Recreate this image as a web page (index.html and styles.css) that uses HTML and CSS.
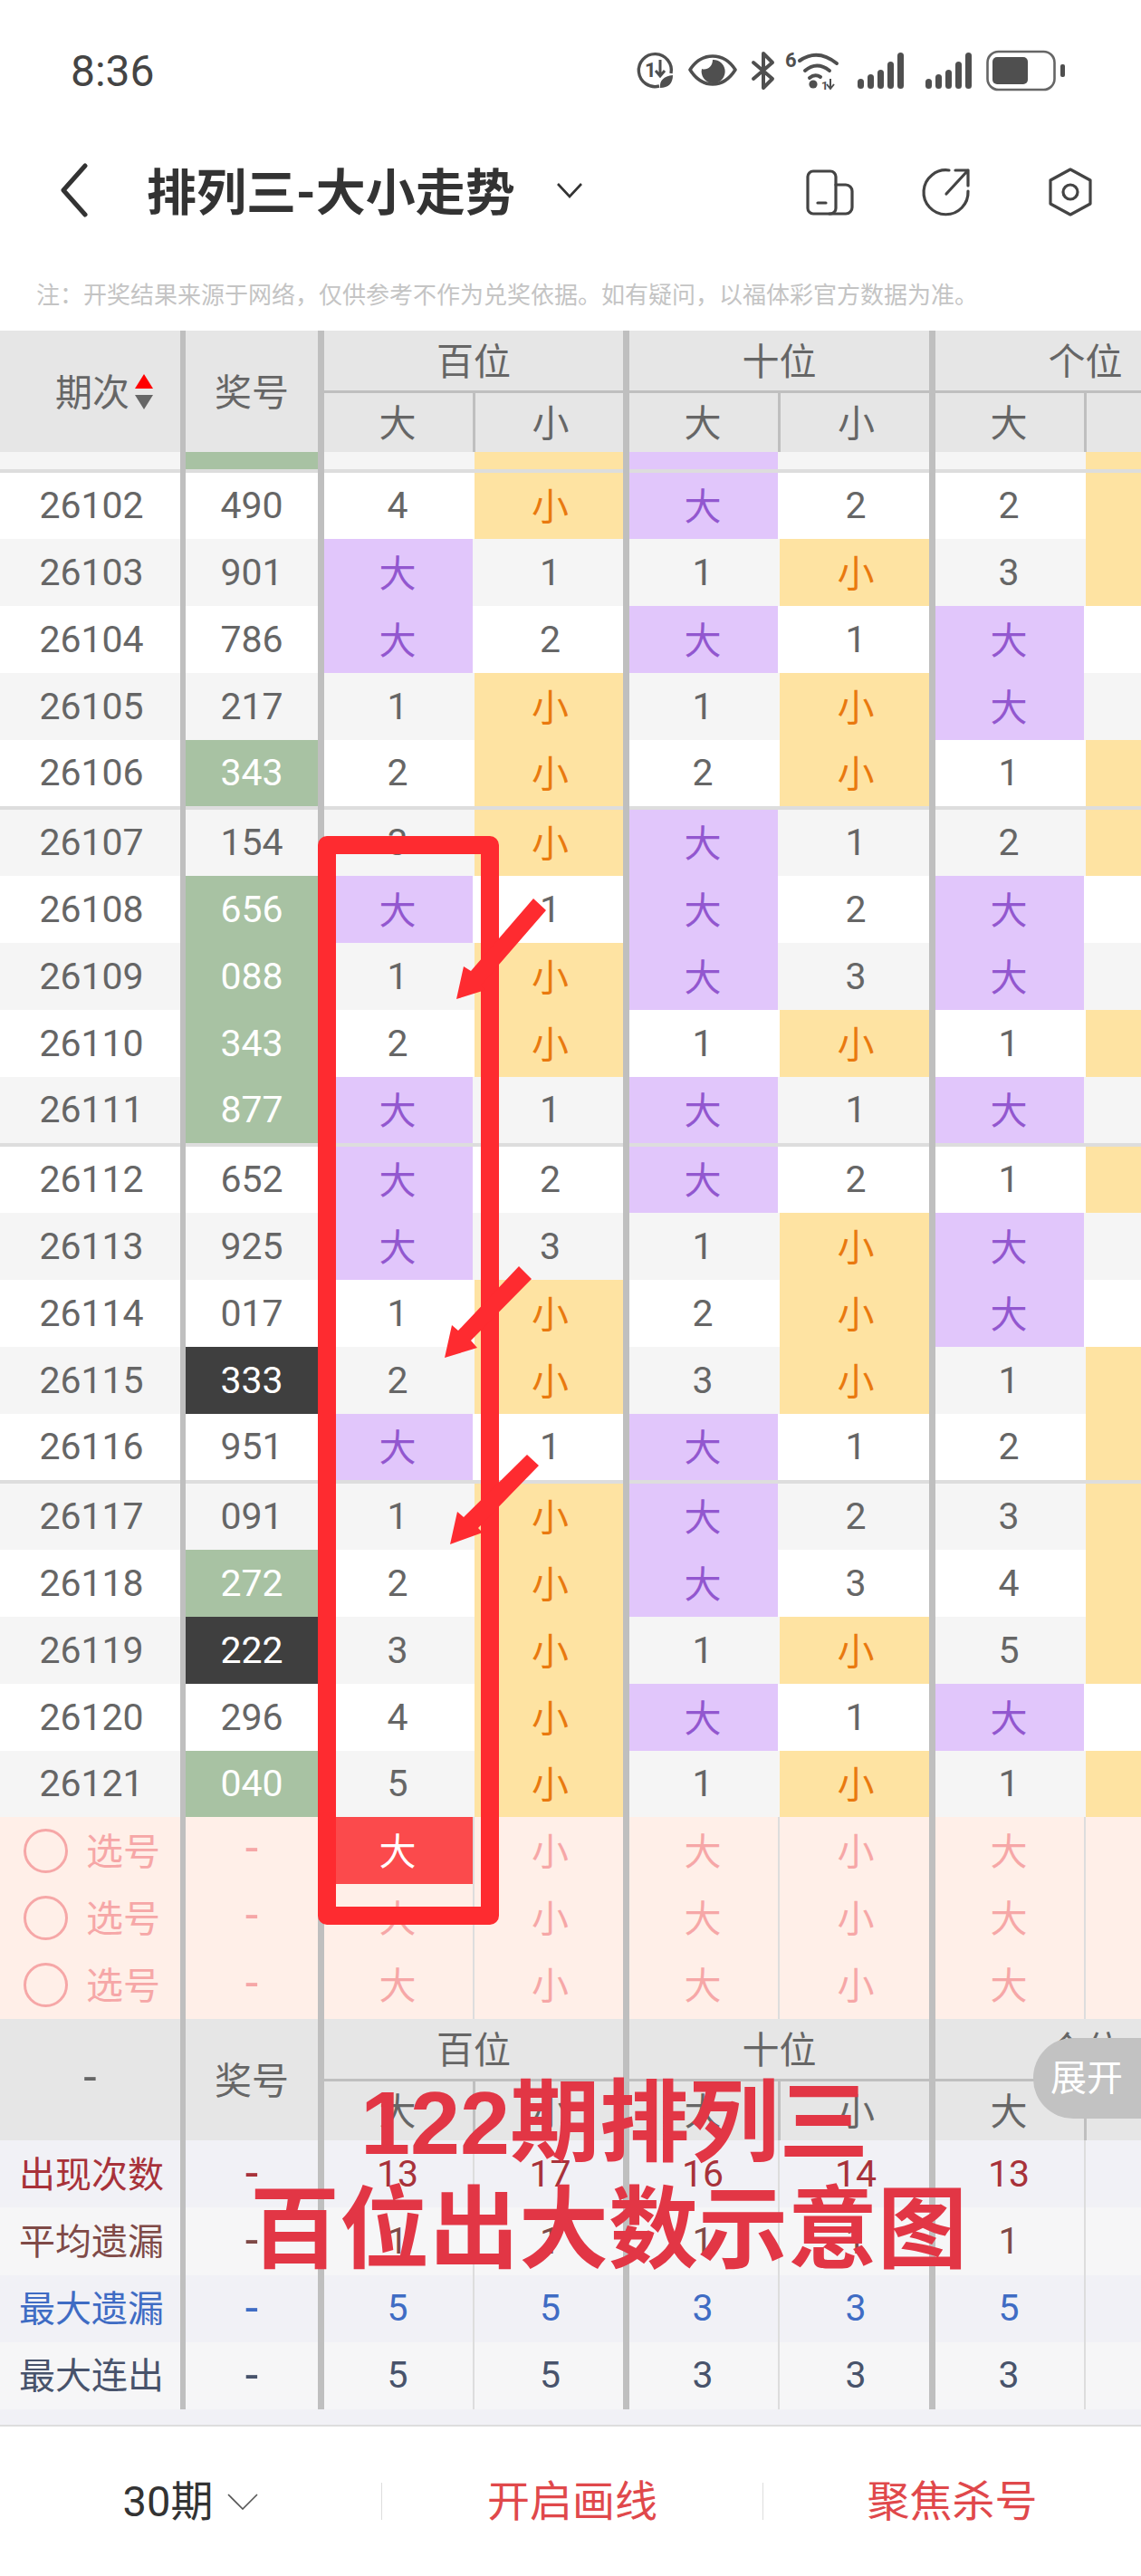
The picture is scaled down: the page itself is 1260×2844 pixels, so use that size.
FILE: index.html
```html
<!DOCTYPE html>
<html lang="zh-CN">
<head>
  <meta charset="UTF-8">
  <meta name="viewport" content="width=device-width, initial-scale=1.0">
  <title>排列三-大小走势</title>
  <link rel="stylesheet" href="styles.css">
</head>
<body>
  <!-- Status bar -->
  <div class="status">
    <span class="time">8:36</span>
    <svg class="status-icons" width="500" height="80" viewBox="0 0 500 80">
      <g fill="none" stroke="#4f4f4f" stroke-width="3.4">
        <path d="M38 55A18 18 0 1 1 51 41"/>
        <path d="M39 26V43M34 38L39 44L44 38" stroke-width="3"/>
      </g>
      <text x="22" y="45" class="icon-text" font-size="22">1</text>
      <path d="M39 57C38 49 43 44 53 43C53 52 48 57 39 57Z" fill="#4f4f4f"/>
      <path d="M72 37C79 26 87 22 97 22C107 22 115 26 122 37C115 48 107 53 97 53C87 53 79 48 72 37Z" fill="none" stroke="#4f4f4f" stroke-width="3.6" stroke-linejoin="round"/>
      <path d="M97 26A13 13 0 1 1 85 36C90 38 97 34 97 26Z" fill="#4f4f4f"/>
      <path d="M142 29L163 47L153 57V19L163 29L142 47" fill="none" stroke="#4f4f4f" stroke-width="4" stroke-linecap="round" stroke-linejoin="round"/>
      <text x="177" y="34" class="icon-text" font-size="22">6</text>
      <g fill="none" stroke="#4f4f4f" stroke-width="4" stroke-linecap="round">
        <path d="M193 27Q213 13 234 30"/>
        <path d="M199 38Q212 27 226 38"/>
        <path d="M204 46Q210 41 216 45"/>
      </g>
      <circle cx="208" cy="53" r="4.6" fill="#4f4f4f"/>
      <text x="217" y="59" class="icon-text" font-size="13">1</text>
      <path d="M227 47V58M223 53L227 58L231 53" fill="none" stroke="#4f4f4f" stroke-width="2"/>
      <g fill="#4f4f4f">
        <rect x="257" y="47" width="7" height="11" rx="3.5"/>
        <rect x="268" y="42" width="7" height="16" rx="3.5"/>
        <rect x="279" y="37" width="7" height="21" rx="3.5"/>
        <rect x="290" y="28" width="7" height="30" rx="3.5"/>
        <rect x="301" y="18" width="7" height="40" rx="3.5"/>
        <rect x="332" y="47" width="7" height="11" rx="3.5"/>
        <rect x="343" y="42" width="7" height="16" rx="3.5"/>
        <rect x="354" y="37" width="7" height="21" rx="3.5"/>
        <rect x="365" y="28" width="7" height="30" rx="3.5"/>
        <rect x="376" y="18" width="7" height="40" rx="3.5"/>
      </g>
      <rect x="400.5" y="17" width="74" height="42" rx="12" fill="none" stroke="#666" stroke-width="2.6"/>
      <rect x="406" y="23" width="39" height="30" rx="5" fill="#4f4f4f"/>
      <rect x="481" y="31" width="5" height="14" rx="2" fill="#4f4f4f"/>
    </svg>
  </div>

  <!-- Title bar -->
  <div class="nav">
    <svg class="back" width="32" height="60" viewBox="0 0 32 60">
      <path d="M28 3L4 30L28 57" fill="none" stroke="#333" stroke-width="5" stroke-linecap="round" stroke-linejoin="round"/>
    </svg>
    <h1>排列三-大小走势</h1>
    <svg class="title-arrow" width="32" height="20" viewBox="0 0 32 20">
      <path d="M3 3L16 17L29 3" fill="none" stroke="#333" stroke-width="2.6"/>
    </svg>
    <svg class="actions" width="330" height="80" viewBox="0 0 330 80">
      <g fill="none" stroke="#444" stroke-width="3.2" stroke-linecap="round" stroke-linejoin="round">
        <rect x="12" y="19" width="31" height="47" rx="6"/>
        <path d="M43 34H54A7 7 0 0 1 61 41V59A7 7 0 0 1 54 66H36"/>
        <path d="M23 54H32"/>
        <path d="M189 41A24.5 24.5 0 1 1 168 18"/>
        <path d="M175 18H189V35M189 18L165 44"/>
        <path d="M302 17L324 29V55L302 67L280 55V29Z"/>
        <circle cx="302" cy="42" r="8"/>
      </g>
    </svg>
  </div>

  <p class="note">注&#xFF1A;开奖结果来源于网络&#xFF0C;仅供参考不作为兑奖依据。如有疑问&#xFF0C;以福体彩官方数据为准。</p>

  <!-- Trend table -->
  <div class="table">
    <div class="thead">
      <div class="th-side"><span>期次</span><i class="sort"><b class="up"></b><b class="down"></b></i></div>
      <div class="th-num">奖号</div>
      <div class="th-group">百位</div>
      <div class="th-group">十位</div>
      <div class="th-group">个位</div>
      <div class="th-sub">大</div><div class="th-sub">小</div>
      <div class="th-sub">大</div><div class="th-sub">小</div>
      <div class="th-sub">大</div><div class="th-sub"></div>
    </div>

    <div class="row clip alt"><div></div><div class="green"></div><div></div><div class="small"></div><div class="big"></div><div></div><div></div><div class="small"></div></div>
    <div class="row sep"><div></div><div></div><div></div><div></div><div></div><div></div><div></div><div></div></div>

    <div class="row edge"><div>26102</div><div>490</div><div>4</div><div class="small">小</div><div class="big">大</div><div>2</div><div>2</div><div class="small"></div></div>
    <div class="row alt"><div>26103</div><div>901</div><div class="big">大</div><div>1</div><div>1</div><div class="small">小</div><div>3</div><div class="small"></div></div>
    <div class="row"><div>26104</div><div>786</div><div class="big">大</div><div>2</div><div class="big">大</div><div>1</div><div class="big">大</div><div></div></div>
    <div class="row alt"><div>26105</div><div>217</div><div>1</div><div class="small">小</div><div>1</div><div class="small">小</div><div class="big">大</div><div></div></div>
    <div class="row edge"><div>26106</div><div class="green">343</div><div>2</div><div class="small">小</div><div>2</div><div class="small">小</div><div>1</div><div class="small"></div></div>
    <div class="row sep"><div></div><div></div><div></div><div></div><div></div><div></div><div></div><div></div></div>

    <div class="row edge alt"><div>26107</div><div>154</div><div>3</div><div class="small">小</div><div class="big">大</div><div>1</div><div>2</div><div class="small"></div></div>
    <div class="row"><div>26108</div><div class="green">656</div><div class="big">大</div><div>1</div><div class="big">大</div><div>2</div><div class="big">大</div><div></div></div>
    <div class="row alt"><div>26109</div><div class="green">088</div><div>1</div><div class="small">小</div><div class="big">大</div><div>3</div><div class="big">大</div><div></div></div>
    <div class="row"><div>26110</div><div class="green">343</div><div>2</div><div class="small">小</div><div>1</div><div class="small">小</div><div>1</div><div class="small"></div></div>
    <div class="row edge alt"><div>26111</div><div class="green">877</div><div class="big">大</div><div>1</div><div class="big">大</div><div>1</div><div class="big">大</div><div></div></div>
    <div class="row sep"><div></div><div></div><div></div><div></div><div></div><div></div><div></div><div></div></div>

    <div class="row edge"><div>26112</div><div>652</div><div class="big">大</div><div>2</div><div class="big">大</div><div>2</div><div>1</div><div class="small"></div></div>
    <div class="row alt"><div>26113</div><div>925</div><div class="big">大</div><div>3</div><div>1</div><div class="small">小</div><div class="big">大</div><div></div></div>
    <div class="row"><div>26114</div><div>017</div><div>1</div><div class="small">小</div><div>2</div><div class="small">小</div><div class="big">大</div><div></div></div>
    <div class="row alt"><div>26115</div><div class="dark">333</div><div>2</div><div class="small">小</div><div>3</div><div class="small">小</div><div>1</div><div class="small"></div></div>
    <div class="row edge"><div>26116</div><div>951</div><div class="big">大</div><div>1</div><div class="big">大</div><div>1</div><div>2</div><div class="small"></div></div>
    <div class="row sep"><div></div><div></div><div></div><div></div><div></div><div></div><div></div><div></div></div>

    <div class="row edge alt"><div>26117</div><div>091</div><div>1</div><div class="small">小</div><div class="big">大</div><div>2</div><div>3</div><div class="small"></div></div>
    <div class="row"><div>26118</div><div class="green">272</div><div>2</div><div class="small">小</div><div class="big">大</div><div>3</div><div>4</div><div class="small"></div></div>
    <div class="row alt"><div>26119</div><div class="dark">222</div><div>3</div><div class="small">小</div><div>1</div><div class="small">小</div><div>5</div><div class="small"></div></div>
    <div class="row"><div>26120</div><div>296</div><div>4</div><div class="small">小</div><div class="big">大</div><div>1</div><div class="big">大</div><div></div></div>
    <div class="row edge alt"><div>26121</div><div class="green">040</div><div>5</div><div class="small">小</div><div>1</div><div class="small">小</div><div>1</div><div class="small"></div></div>

    <!-- Number picker -->
    <div class="picker">
      <div class="row"><div class="pick"><i class="radio"></i>选号</div><div class="dash">-</div><div class="picked">大</div><div>小</div><div>大</div><div>小</div><div>大</div><div></div></div>
      <div class="row"><div class="pick"><i class="radio"></i>选号</div><div class="dash">-</div><div>大</div><div>小</div><div>大</div><div>小</div><div>大</div><div></div></div>
      <div class="row"><div class="pick"><i class="radio"></i>选号</div><div class="dash">-</div><div>大</div><div>小</div><div>大</div><div>小</div><div>大</div><div></div></div>
    </div>

    <div class="thead foot-head">
      <div class="th-side dash">-</div>
      <div class="th-num">奖号</div>
      <div class="th-group">百位</div>
      <div class="th-group">十位</div>
      <div class="th-group">个位</div>
      <div class="th-sub">大</div><div class="th-sub">小</div>
      <div class="th-sub">大</div><div class="th-sub">小</div>
      <div class="th-sub">大</div><div class="th-sub"></div>
    </div>

    <!-- Stats -->
    <div class="stats">
      <div class="row s-count"><div class="label">出现次数</div><div class="dash">-</div><div>13</div><div>17</div><div>16</div><div>14</div><div>13</div><div></div></div>
      <div class="row s-avg"><div class="label">平均遗漏</div><div class="dash">-</div><div>1</div><div>1</div><div>1</div><div>1</div><div>1</div><div></div></div>
      <div class="row s-max"><div class="label">最大遗漏</div><div class="dash">-</div><div>5</div><div>5</div><div>3</div><div>3</div><div>5</div><div></div></div>
      <div class="row s-run"><div class="label">最大连出</div><div class="dash">-</div><div>5</div><div>5</div><div>3</div><div>3</div><div>3</div><div></div></div>
    </div>
  </div>

  <!-- Bottom bar -->
  <div class="bottom">
    <div class="bottom-item period">30期
      <svg width="34" height="18" viewBox="0 0 34 18">
        <path d="M1 1L17 17L33 1" fill="none" stroke="#555" stroke-width="1.6"/>
      </svg>
    </div>
    <div class="bottom-item red">开启画线</div>
    <div class="bottom-item red">聚焦杀号</div>
  </div>

  <div class="expand">展开</div>

  <!-- Hand-drawn markup on top of the screenshot -->
  <svg class="markup" width="1260" height="2844" viewBox="0 0 1260 2844">
    <rect x="361" y="933" width="180" height="1182" fill="none" stroke="#fe2b30" stroke-width="20" stroke-linejoin="round"/>
    <g fill="#fe2b30">
      <polygon points="589,992 603,1005 531,1088 536,1093 504,1103 512,1067 520,1072"/>
      <polygon points="573,1398 587,1412 520,1480 527,1488 491,1499 499,1463 506,1469"/>
      <polygon points="582,1606 595,1618 528,1687 533,1692 497,1705 505,1669 512,1675"/>
    </g>
  </svg>
  <div class="caption">
    <div class="caption-top">122期排列三</div>
    <div>百位出大数示意图</div>
  </div>
</body>
</html>
```

FILE: styles.css
```css
/* General Styles */
* {
  box-sizing: border-box;
}
body {
  position: relative;
  width: 1260px;
  height: 2844px;
  margin: 0;
  overflow: hidden;
  background: #fff;
  color: #666;
  font-family: Roboto, "Noto Sans CJK SC", sans-serif;
  font-size: 41px;
}

/* Status bar */
.status {
  display: flex;
  justify-content: space-between;
  height: 130px;
  padding: 40px 70px 0 78px;
}
.time {
  font-size: 48px;
  line-height: 78px;
  color: #444;
}
.icon-text {
  font-family: Roboto, sans-serif;
  font-weight: 700;
  fill: #4f4f4f;
}

/* Title bar */
.nav {
  display: flex;
  align-items: center;
  height: 160px;
  padding: 0 50px 0 66px;
}
.nav h1 {
  margin: 0 0 4px 64px;
  font-size: 55px;
  font-weight: 700;
  color: #333;
  white-space: nowrap;
}
.title-arrow {
  margin-left: 44px;
}
.actions {
  margin-left: auto;
}
.note {
  height: 75px;
  margin: 0;
  padding-left: 40px;
  font-size: 26px;
  line-height: 73px;
  color: #c4c4c4;
  white-space: nowrap;
}

/* Table */
.table {
  width: 1364px;
  background: #f1f1f6;
  padding-bottom: 17px;
  border-bottom: 2px solid #ddd;
}
.thead,
.row {
  display: grid;
  grid-template-columns: 199px 152px 171px 166px 171px 167px 171px 167px;
}
.thead {
  height: 134px;
  grid-template-rows: 69px 65px;
  background: #e6e6e6;
}
.thead > div {
  display: flex;
  align-items: center;
  justify-content: center;
  padding-bottom: 5px;
}
.th-side {
  grid-row: 1 / 3;
}
.thead > .th-side:not(.dash) {
  justify-content: flex-start;
  padding-left: 61px;
}
.th-num {
  grid-column: 2;
  grid-row: 1 / 3;
  border-left: 6px solid #bfbfbf;
}
.th-group {
  grid-column: span 2;
  border-left: 7px solid #bfbfbf;
  border-bottom: 3px solid #bfbfbf;
}
.th-sub:nth-child(even) {
  border-left: 7px solid #bfbfbf;
  padding-right: 2px;
}
.th-sub:nth-child(odd) {
  border-left: 3px solid #bfbfbf;
  padding-left: 3px;
}
.sort {
  display: flex;
  flex-direction: column;
  gap: 7px;
  margin-left: 6px;
  padding-top: 5px;
}
.sort b {
  width: 0;
  height: 0;
  border-left: 10px solid transparent;
  border-right: 10px solid transparent;
}
.sort .up {
  border-bottom: 16px solid #f00;
}
.sort .down {
  border-top: 16px solid #666;
}

.row {
  height: 74px;
  background: #fff;
}
.row.alt {
  background: #f5f5f5;
}
.row.edge {
  height: 73px;
}
.row.clip {
  height: 19px;
}
.row.sep {
  height: 4px;
  background: #ddd;
}
.row.sep > div {
  background: #ddd;
  padding: 0;
}
.row > div {
  display: flex;
  align-items: center;
  justify-content: center;
  padding-bottom: 1px;
  background-clip: padding-box;
}
.row > :nth-child(1) {
  padding-left: 3px;
}
.row > :nth-child(2) {
  border-left: 6px solid #bfbfbf;
}
.row > :nth-child(3),
.row > :nth-child(5),
.row > :nth-child(7) {
  border-left: 7px solid #bfbfbf;
  padding-right: 2px;
}
.row > :nth-child(4),
.row > :nth-child(6),
.row > :nth-child(8) {
  border-left: 2px solid transparent;
  padding-left: 3px;
}
.row > .big {
  padding-bottom: 5px;
  background-color: #e1c6fb;
  color: #9257cf;
}
.row > .small {
  padding-bottom: 5px;
  background-color: #fee3a2;
  color: #e9790f;
}
.row > .green {
  background-color: #a8c2a3;
  color: #fff;
}
.row > .dark {
  background-color: #3f3f3f;
  color: #fff;
}
.row > .dash,
.thead > .dash {
  font-size: 52px;
}

/* Picker */
.picker {
  display: flex;
  flex-direction: column;
  height: 223px;
}
.picker .row {
  flex: 1;
  background: #ffefe8;
  color: #f6a7a7;
}
.picker .row > div {
  padding-bottom: 5px;
}
.picker .row > :nth-child(4),
.picker .row > :nth-child(6),
.picker .row > :nth-child(8) {
  border-left-color: #ddd;
}
.row > .pick {
  justify-content: flex-start;
  gap: 20px;
  padding-left: 26px;
}
.radio {
  width: 49px;
  height: 49px;
  margin-top: 5px;
  border: 3px solid #f6a7a7;
  border-radius: 50%;
}
.row > .picked {
  background-color: #fb4a4c;
  color: #fff;
}

/* Stats */
.stats {
  display: flex;
  flex-direction: column;
  height: 297px;
}
.stats .row {
  flex: 1;
  background: #f1f1f6;
}
.stats .row > :nth-child(4),
.stats .row > :nth-child(6),
.stats .row > :nth-child(8) {
  border-left-color: #ddd;
}
.stats .s-avg,
.stats .s-run {
  background: #f6f6f7;
}
.row > .label {
  padding: 0 0 5px 3px;
  font-size: 40px;
}
.s-count {
  color: #a8323a;
}
.s-avg {
  color: #7f4a47;
}
.s-max {
  color: #3f6cc4;
}
.s-run {
  color: #48536b;
}

/* Bottom bar */
.bottom {
  display: grid;
  grid-template-columns: 421px 421px 418px;
  align-items: center;
  height: 165px;
  font-size: 47px;
  color: #333;
}
.bottom-item {
  display: flex;
  align-items: center;
  justify-content: center;
  gap: 16px;
  height: 41px;
  line-height: 41px;
}
.bottom-item + .bottom-item {
  border-left: 1px solid #ddd;
}
.red {
  color: #e0484b;
}

/* Overlays */
.expand {
  position: absolute;
  left: 1141px;
  top: 2250px;
  display: flex;
  align-items: center;
  width: 119px;
  height: 89px;
  padding: 0 0 8px 19px;
  border-radius: 44px 0 0 44px;
  background: #c2c2c2;
  color: #fff;
  font-size: 40px;
}
.markup {
  position: absolute;
  left: 0;
  top: 0;
}
.caption {
  position: absolute;
  left: 276px;
  top: 2285px;
  font-size: 99px;
  font-weight: 700;
  line-height: 118px;
  color: #e23645;
  white-space: nowrap;
}
.caption-top {
  margin-left: 122px;
  font-family: "Liberation Sans", "Noto Sans CJK SC", sans-serif;
}
```
